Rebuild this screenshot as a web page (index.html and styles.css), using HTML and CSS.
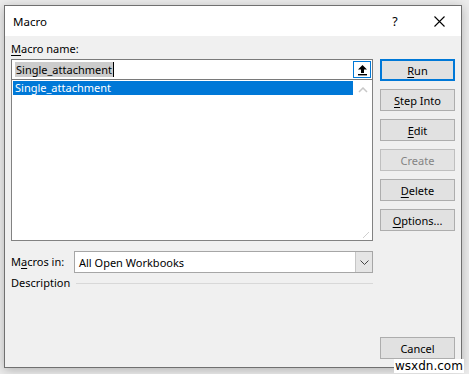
FILE: index.html
```html
<!DOCTYPE html>
<html lang="en">
<head>
  <meta charset="UTF-8" />
  <title>Macro</title>
  <link rel="stylesheet" href="styles.css">
</head>
<body>

  <div class="dialog">
    <div class="titlebar">
      <span class="title">Macro</span>
      <span class="help">?</span>
      <span class="close">
        <svg width="11" height="11" viewBox="0 0 11 11"><path d="M0.5 0.5 L10.5 10.5 M10.5 0.5 L0.5 10.5" stroke="#000" stroke-width="1.1" fill="none"/></svg>
      </span>
    </div>

    <div class="content">
      <div class="main">
        <div class="left">
          <div class="field-label"><u>M</u>acro name:</div>
          <div class="name-input">
            <span class="sel">Single_attachment</span><span class="caret"></span>
            <span class="up-btn">
              <svg width="11" height="12" viewBox="0 0 11 12"><path d="M5.5 1 L10 5.5 H7 V9 H4 V5.5 H1 Z" fill="#000"/><rect x="1" y="10" width="9" height="1.4" fill="#000"/></svg>
            </span>
          </div>
          <div class="listbox">
            <div class="list-items">
              <div class="item selected">Single_attachment</div>
            </div>
            <div class="scrollbar">
              <svg width="10" height="6" viewBox="0 0 10 6"><path d="M1 5 L5 1 L9 5" stroke="#c8c8c8" stroke-width="1.5" fill="none"/></svg>
              <svg class="grip" width="6" height="6" viewBox="0 0 6 6"><path d="M0 6 L6 0" stroke="#cfcfcf" stroke-width="1"/></svg>
            </div>
          </div>
        </div>

        <div class="buttons">
          <div class="btn default"><u>R</u>un</div>
          <div class="btn"><u>S</u>tep Into</div>
          <div class="btn"><u>E</u>dit</div>
          <div class="btn disabled">Create</div>
          <div class="btn"><u>D</u>elete</div>
          <div class="btn"><u>O</u>ptions...</div>
        </div>
      </div>

      <div class="macros-row">
        <span class="row-label">M<u>a</u>cros in:</span>
        <div class="select">
          <span class="select-text">All Open Workbooks</span>
          <span class="drop-btn">
            <svg width="9" height="5" viewBox="0 0 9 5"><path d="M0.5 0.5 L4.5 4.5 L8.5 0.5" stroke="#444" stroke-width="1" fill="none"/></svg>
          </span>
        </div>
      </div>

      <div class="desc-row">
        <span class="row-label">Description</span>
        <span class="rule"></span>
      </div>

      <div class="footer">
        <div class="btn">Cancel</div>
      </div>
    </div>
  </div>

  <div class="watermark">wsxdn.com</div>

</body>
</html>
```

FILE: styles.css
```css
* {
  margin: 0;
  padding: 0;
  box-sizing: border-box;
}

html, body {
  height: 100%;
  font-family: 'Segoe UI', 'Noto Sans', sans-serif;
  font-size: 11px;
  color: #000;
  background-color: #ececec;
}

body {
  padding: 5px 0 0 4px;
  position: relative;
}

u {
  text-decoration: underline;
  text-underline-offset: 2px;
}

.dialog {
  width: 458px;
  height: 363px;
  border: 1px solid #707070;
  background-color: #f0f0f0;
  display: flex;
  flex-direction: column;
  box-shadow: 0 2px 10px rgba(0, 0, 0, 0.25);
}

/* title bar */
.titlebar {
  height: 30px;
  background-color: #fff;
  display: flex;
  align-items: center;
  padding-left: 8px;
}

.title {
  flex: 1;
  font-size: 11.5px;
}

.help {
  width: 20px;
  text-align: center;
  font-size: 12.5px;
  margin-right: 14px;
}

.close {
  width: 40px;
  display: flex;
  justify-content: center;
  margin-right: 2px;
}

.content {
  flex: 1;
  display: flex;
  flex-direction: column;
  padding: 5px 6px 8px 6px;
}

.main {
  display: flex;
  gap: 7px;
}

.left {
  width: 362px;
  display: flex;
  flex-direction: column;
}

.field-label {
  height: 16px;
  line-height: 16px;
  margin-bottom: 2px;
}

/* name input */
.name-input {
  height: 21px;
  border: 1px solid #7a7a7a;
  background-color: #fff;
  display: flex;
  align-items: center;
  padding-left: 3px;
}

.sel {
  background-color: #cccccc;
  line-height: 15px;
  padding: 0 1px;
}

.caret {
  width: 1px;
  height: 15px;
  background-color: #000;
}

.up-btn {
  margin-left: auto;
  margin-right: 1px;
  width: 18px;
  height: 17px;
  border: 1px solid #0078d7;
  background-color: #fff;
  display: flex;
  align-items: center;
  justify-content: center;
}

/* list */
.listbox {
  height: 161px;
  border: 1px solid #828282;
  border-top: none;
  background-color: #fff;
  display: flex;
}

.list-items {
  flex: 1;
  padding: 1px 0 0 1px;
}

.item {
  height: 14px;
  line-height: 14px;
  padding-left: 2px;
}

.item.selected {
  background-color: #0078d7;
  color: #fff;
}

.scrollbar {
  width: 19px;
  display: flex;
  flex-direction: column;
  align-items: center;
  padding-top: 7px;
  border-left: 1px solid #fff;
}

.scrollbar .grip {
  margin-top: auto;
  margin-left: 6px;
  margin-bottom: 2px;
}

/* buttons */
.buttons {
  width: 75px;
  margin-top: 18px;
  display: flex;
  flex-direction: column;
  gap: 8px;
}

.btn {
  width: 75px;
  height: 22px;
  border: 1px solid #adadad;
  background-color: #e1e1e1;
  display: flex;
  align-items: center;
  justify-content: center;
}

.btn.default {
  border: 2px solid #0078d7;
}

.btn.disabled {
  color: #838383;
  border-color: #bfbfbf;
  background-color: #e3e3e3;
}

/* macros in */
.macros-row {
  width: 362px;
  margin-top: 10px;
  display: flex;
  align-items: center;
}

.row-label {
  line-height: 16px;
}

.select {
  margin-left: auto;
  width: 299px;
  height: 22px;
  border: 1px solid #a6a6a6;
  background-color: #fff;
  display: flex;
  align-items: center;
  padding-left: 4px;
}

.select-text {
  flex: 1;
}

.drop-btn {
  width: 17px;
  height: 20px;
  background-color: #e5e5e5;
  border-left: 1px solid #c6c6c6;
  display: flex;
  align-items: center;
  justify-content: center;
}

.desc-row {
  width: 362px;
  margin-top: 2px;
  display: flex;
  align-items: center;
  gap: 6px;
}

.rule {
  flex: 1;
  height: 1px;
  background-color: #d8d8d8;
}

.footer {
  margin-top: auto;
  display: flex;
  justify-content: flex-end;
}

.watermark {
  position: absolute;
  left: 394px;
  top: 359px;
  padding: 0 1px;
  background-color: #fff;
  font-family: 'DejaVu Sans', sans-serif;
  font-size: 12px;
  line-height: 14px;
  color: #000;
}
```
